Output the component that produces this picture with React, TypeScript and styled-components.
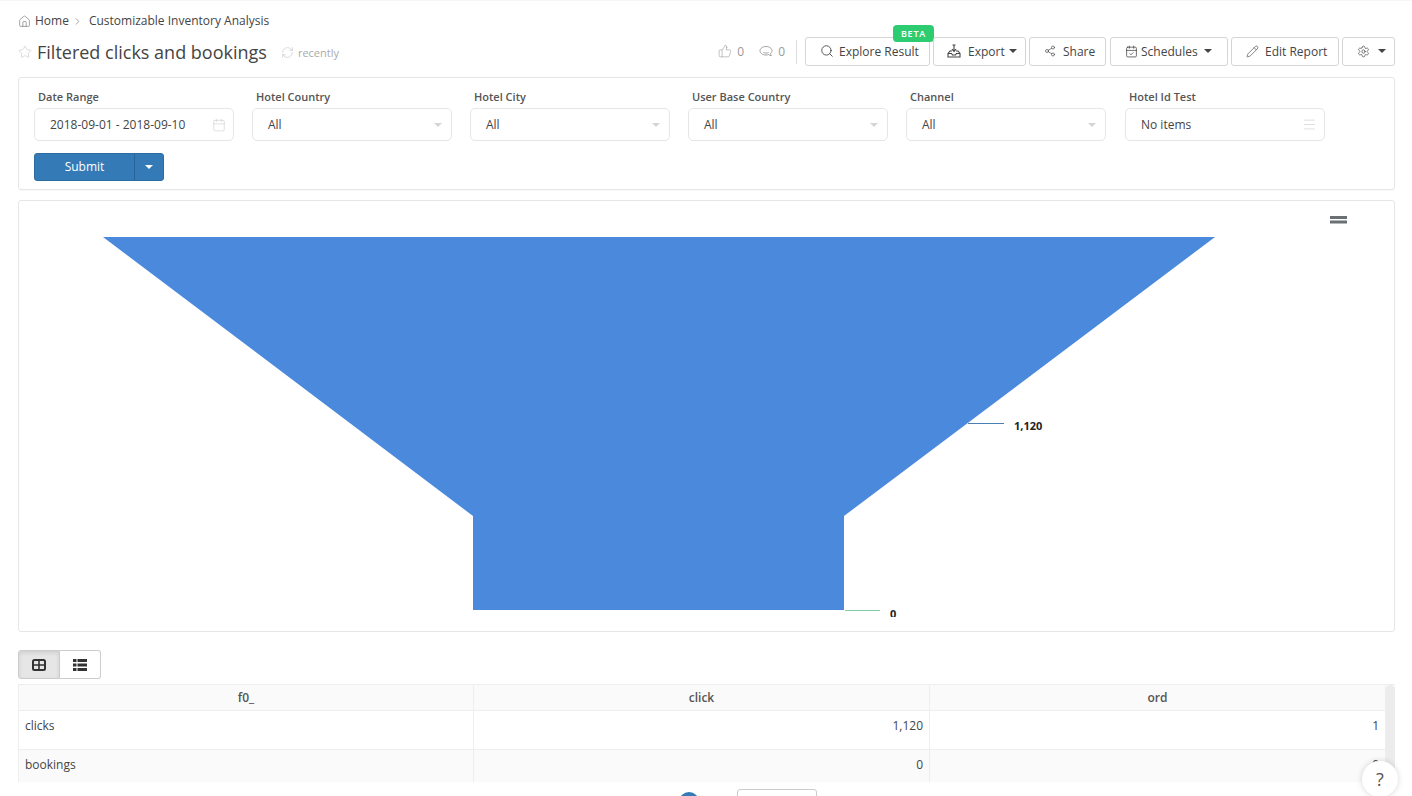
import React from "react";
import styled, { createGlobalStyle } from "styled-components";
import { Home, ChevronRight, Star, RefreshCw, ThumbsUp, Search, Share2, CalendarCheck, Pencil, Settings, Calendar, Menu } from "lucide-react";

const Global = createGlobalStyle`
  html, body { margin: 0; padding: 0; height: 796px; overflow: hidden; background: #fff; }
  body { font-family: "Open Sans", "Liberation Sans", sans-serif; font-size: 12px; color: #444; }
  * { box-sizing: border-box; }
`;

const Page = styled.div`
  position: relative;
  height: 796px;
  padding: 0 17px 0 18px;
  border-top: 1px solid #f6f6f6;
  overflow: hidden;
`;
const Breadcrumb = styled.div`
  display: flex;
  align-items: center;
  height: 28px;
  margin-top: 6px;
  font-size: 12px;
  line-height: 18px;
  color: #444;
  svg { color: #777; flex: none; }
`;
const Crumb = styled.span<{ $gap?: number }>`
  margin-left: ${(p) => p.$gap ?? 0}px;
`;
const HeaderRow = styled.div`
  height: 42px;
  display: flex;
  align-items: flex-start;
  justify-content: space-between;
`;
const TitleWrap = styled.div`
  display: flex;
  align-items: center;
  height: 30px;
  margin-top: 2px;
  svg { flex: none; color: #ccc; }
`;
const Title = styled.h1`
  margin: 0 14px 0 5px;
  font-size: 18px;
  font-weight: 400;
  color: #444;
  line-height: 30px;
`;
const Recently = styled.span`
  margin-left: 4px;
  font-size: 11px;
  color: #aaa;
`;
const Actions = styled.div`
  display: flex;
  align-items: center;
  margin-top: 2px;
`;
const Stat = styled.span<{ $mr?: number }>`
  display: inline-flex;
  align-items: center;
  gap: 5px;
  margin-right: ${(p) => p.$mr ?? 14}px;
  padding-bottom: 1px;
  color: #999;
  font-size: 12px;
  svg { color: #999; }
`;
const Divider = styled.span`
  width: 1px;
  height: 24px;
  background: #ddd;
  margin: 0 8px 0 -3px;
`;
const ToolButton = styled.button<{ $w: number; $ml?: number; $pl?: number; $gap?: number }>`
  position: relative;
  width: ${(p) => p.$w}px;
  height: 29px;
  margin-left: ${(p) => p.$ml ?? 3}px;
  display: inline-flex;
  align-items: center;
  justify-content: flex-start;
  gap: ${(p) => p.$gap ?? 7}px;
  padding: 0 0 1px ${(p) => p.$pl ?? 14}px;
  background: #fff;
  border: 1px solid #d5d5d5;
  border-radius: 3px;
  font: 400 12px "Open Sans", sans-serif;
  color: #444;
  svg { color: #444; flex: none; }
`;
const Beta = styled.span`
  position: absolute;
  top: -13px;
  right: -5px;
  width: 41px;
  height: 17px;
  background: #2ecc71;
  color: #fff;
  border-radius: 4px;
  font-size: 9px;
  font-weight: 600;
  line-height: 17px;
  letter-spacing: 0.8px;
  text-align: center;
`;
const Caret = styled.span<{ $color?: string; $ml?: number }>`
  width: 0;
  height: 0;
  border-left: 4px solid transparent;
  border-right: 4px solid transparent;
  border-top: 4px solid ${(p) => p.$color ?? "#444"};
  margin-left: ${(p) => p.$ml ?? 0}px;
  flex: none;
`;
const FilterPanel = styled.section`
  height: 113px;
  border: 1px solid #e6e6e6;
  border-radius: 3px;
  padding: 10px 15px 0;
  box-shadow: 0 1px 1px rgba(0,0,0,0.03);
`;
const Fields = styled.div`
  display: flex;
  gap: 18px;
`;
const Field = styled.div<{ $ml?: number }>`
  width: 200px;
  margin-left: ${(p) => p.$ml ?? 0}px;
`;
const Label = styled.label`
  display: block;
  height: 20px;
  padding-left: 4px;
  font-size: 11px;
  line-height: 18px;
  font-weight: 600;
  color: #555;
`;
const Control = styled.div`
  height: 33px;
  display: flex;
  align-items: center;
  justify-content: space-between;
  padding: 0 9px 0 15px;
  border: 1px solid #e6e6e6;
  border-radius: 5px;
  font-size: 12px;
  color: #444;
  svg { color: #ccc; margin-right: -2px; }
`;
const SubmitGroup = styled.div`
  display: flex;
  width: 130px;
  height: 28px;
  margin-top: 12px;
  border-radius: 3px;
  overflow: hidden;
  background: #337ab7;
  border: 1px solid #2e6da4;
`;
const Submit = styled.button`
  width: 100px;
  border: 0;
  border-right: 1px solid #2a6496;
  background: none;
  color: #fff;
  font: 400 12px "Open Sans", sans-serif;
  padding: 0 0 2px;
`;
const SubmitCaret = styled.button`
  flex: 1;
  border: 0;
  background: none;
  display: flex;
  align-items: center;
  justify-content: center;
  padding: 0;
`;
const ChartPanel = styled.section`
  height: 432px;
  margin-top: 10px;
  border: 1px solid #e6e6e6;
  border-radius: 3px;
  overflow: hidden;
  svg { display: block; }
`;
const ChartLabel = styled.text`
  font: 700 11px "Open Sans", sans-serif;
  fill: #222;
`;
const Toggle = styled.div`
  display: flex;
  margin-top: 18px;
  height: 29px;
`;
const ToggleBtn = styled.button<{ $active?: boolean }>`
  width: ${(p) => (p.$active ? 42 : 41)}px;
  border: 1px solid #ccc;
  border-left-width: ${(p) => (p.$active ? 1 : 0)}px;
  border-radius: ${(p) => (p.$active ? "3px 0 0 3px" : "0 3px 3px 0")};
  background: ${(p) => (p.$active ? "#e6e6e6" : "#fff")};
  box-shadow: ${(p) => (p.$active ? "inset 0 2px 4px rgba(0,0,0,.1)" : "none")};
  display: flex;
  align-items: center;
  justify-content: center;
  padding: 0;
  color: #333;
`;
const TableWrap = styled.div`
  position: relative;
  height: 98px;
  margin-top: 5px;
  overflow: hidden;
  border-top: 1px solid #eee;
`;
const DataTable = styled.table`
  width: 1368px;
  table-layout: fixed;
  border-collapse: collapse;
  font-size: 12px;
  color: #444;
`;
const Th = styled.th<{ $w?: number }>`
  width: ${(p) => (p.$w ? `${p.$w}px` : "auto")};
  height: 25px;
  padding: 0;
  background: #fafafa;
  border: 1px solid #eee;
  border-top: 0;
  font-weight: 600;
  font-size: 12px;
  color: #555;
`;
const Td = styled.td<{ $right?: boolean; $alt?: boolean }>`
  height: 39px;
  padding: 6px 6px 0;
  text-align: ${(p) => (p.$right ? "right" : "left")};
  background: ${(p) => (p.$alt ? "#fafafa" : "#fff")};
  border: 1px solid #eee;
  vertical-align: top;
  line-height: 18px;
`;
const ScrollTrack = styled.div`
  position: absolute;
  top: 0;
  right: 0;
  width: 9px;
  height: 100%;
  background: #ececec;
  border-radius: 4px;
`;
const Pager = styled.div`
  display: flex;
  align-items: flex-start;
  margin-top: 7px;
  padding-left: 661px;
`;
const PageDot = styled.span`
  width: 20px;
  height: 20px;
  margin-top: 3px;
  border-radius: 50%;
  background: #337ab7;
`;
const PageSelect = styled.div`
  width: 80px;
  height: 24px;
  margin-left: 38px;
  border: 1px solid #ccc;
  border-radius: 3px;
`;
const Help = styled.div`
  position: absolute;
  right: 14px;
  bottom: -1px;
  width: 36px;
  height: 36px;
  border-radius: 50%;
  background: #fff;
  box-shadow: 0 0 6px rgba(0,0,0,.16);
  display: flex;
  align-items: center;
  justify-content: center;
  font-size: 18px;
  color: #555;
`;

const ExportIcon = () => (
  <svg width="14" height="14" viewBox="0 0 14 14" fill="none" stroke="currentColor" strokeWidth="1.100">
    <path d="M1 9.500 3 7h2M13 9.500 11 7H9M1 9.500V13h12V9.500H9.500L8.500 11h-3l-1-1.500z" />
    <path d="M7 1v6M5 5.200 7 7.500 9 5.200M5.500 1h3" />
  </svg>
);
const BubbleIcon = () => (
  <svg width="14" height="14" viewBox="0 0 14 14" fill="none" stroke="currentColor" strokeWidth="0.900">
    <path d="M7 2.500C3.700 2.500 1 4.300 1 6.800S3.700 11 7 11c.9 0 1.700-.1 2.500-.4.800.7 1.900 1 3 .9-.6-.6-1-1.300-1-2.100 1-.7 1.500-1.600 1.500-2.600C13 4.300 10.300 2.500 7 2.500Z" />
    <path d="M4.500 8.500c1.500.8 3.500.8 5 0" />
  </svg>
);
const TableIcon = () => (
  <svg width="14" height="12" viewBox="0 0 14 12" fill="none" stroke="currentColor">
    <rect x="1" y="1" width="12" height="10" rx="1.500" strokeWidth="2" />
    <path d="M7 1v10M1 6h12" strokeWidth="1.600" />
  </svg>
);
const ListIcon = () => (
  <svg width="14" height="12" viewBox="0 0 14 12" fill="currentColor">
    <rect x="0" y="0" width="3.500" height="3" />
    <rect x="4.500" y="0" width="9.500" height="3" />
    <rect x="0" y="4.500" width="3.500" height="3" />
    <rect x="4.500" y="4.500" width="9.500" height="3" />
    <rect x="0" y="9" width="3.500" height="3" />
    <rect x="4.500" y="9" width="9.500" height="3" />
  </svg>
);

const filters = ["Hotel Country", "Hotel City", "User Base Country", "Channel"];

export default function App() {
  return (
    <Page>
      <Global />
      <Breadcrumb>
        <Home size={13} strokeWidth={1.2} />
        <Crumb $gap={4}>Home</Crumb>
        <ChevronRight size={11} strokeWidth={1.5} style={{ marginLeft: 3 }} />
        <Crumb $gap={6}>Customizable Inventory Analysis</Crumb>
      </Breadcrumb>
      <HeaderRow>
        <TitleWrap>
          <Star size={14} strokeWidth={1.2} />
          <Title>Filtered clicks and bookings</Title>
          <RefreshCw size={13} strokeWidth={1.3} />
          <Recently>recently</Recently>
        </TitleWrap>
        <Actions>
          <Stat $mr={15}><ThumbsUp size={14} strokeWidth={1} />0</Stat>
          <Stat><BubbleIcon />0</Stat>
          <Divider />
          <ToolButton $w={125} $ml={0} $gap={5}>
            <Search size={14} strokeWidth={1.5} /> Explore Result
            <Beta>BETA</Beta>
          </ToolButton>
          <ToolButton $w={93} $pl={13}><ExportIcon /> Export <Caret $ml={-3} /></ToolButton>
          <ToolButton $w={77}><Share2 size={12} strokeWidth={1.3} /> Share</ToolButton>
          <ToolButton $w={118} $ml={4} $gap={3}><CalendarCheck size={13} strokeWidth={1.4} /> Schedules <Caret $ml={3} /></ToolButton>
          <ToolButton $w={108} $gap={6}><Pencil size={13} strokeWidth={1.2} /> Edit Report</ToolButton>
          <ToolButton $w={53} $gap={8}><Settings size={13} strokeWidth={1.3} /> <Caret /></ToolButton>
        </Actions>
      </HeaderRow>

      <FilterPanel>
        <Fields>
          <Field>
            <Label>Date Range</Label>
            <Control>
              2018-09-01 - 2018-09-10
              <Calendar size={14} strokeWidth={1} />
            </Control>
          </Field>
          {filters.map((label) => (
            <Field key={label}>
              <Label>{label}</Label>
              <Control>
                All
                <Caret $color="#d5d5d5" />
              </Control>
            </Field>
          ))}
          <Field $ml={1}>
            <Label>Hotel Id Test</Label>
            <Control>
              No items
              <Menu size={15} strokeWidth={1} />
            </Control>
          </Field>
        </Fields>
        <SubmitGroup>
          <Submit>Submit</Submit>
          <SubmitCaret><Caret $color="#fff" /></SubmitCaret>
        </SubmitGroup>
      </FilterPanel>

      <ChartPanel>
        <svg width="1375" height="430" viewBox="19 201 1375 430">
          <defs>
            <clipPath id="plot"><rect x="19" y="201" width="1375" height="416" /></clipPath>
          </defs>
          <polygon points="103,237 1215,237 844,516 844,610 473,610 473,516" fill="#4a89dc" />
          <line x1="968" y1="423.500" x2="1004" y2="423.500" stroke="#4a7fb5" strokeWidth="1" />
          <line x1="845" y1="610.500" x2="880" y2="610.500" stroke="#7fd1a8" strokeWidth="1" />
          <ChartLabel x="1014" y="430">1,120</ChartLabel>
          <g clipPath="url(#plot)"><ChartLabel x="890" y="617.500">0</ChartLabel></g>
          <path d="M1330 217.500h17M1330 222h17" stroke="#6b7072" strokeWidth="2.800" />
        </svg>
      </ChartPanel>

      <Toggle>
        <ToggleBtn $active><TableIcon /></ToggleBtn>
        <ToggleBtn><ListIcon /></ToggleBtn>
      </Toggle>

      <TableWrap>
        <DataTable>
          <thead>
            <tr><Th $w={455}>f0_</Th><Th $w={456}>click</Th><Th>ord</Th></tr>
          </thead>
          <tbody>
            <tr><Td>clicks</Td><Td $right>1,120</Td><Td $right>1</Td></tr>
            <tr><Td $alt>bookings</Td><Td $alt $right>0</Td><Td $alt $right>0</Td></tr>
          </tbody>
        </DataTable>
        <ScrollTrack />
      </TableWrap>

      <Pager>
        <PageDot />
        <PageSelect />
      </Pager>
      <Help>?</Help>
    </Page>
  );
}
